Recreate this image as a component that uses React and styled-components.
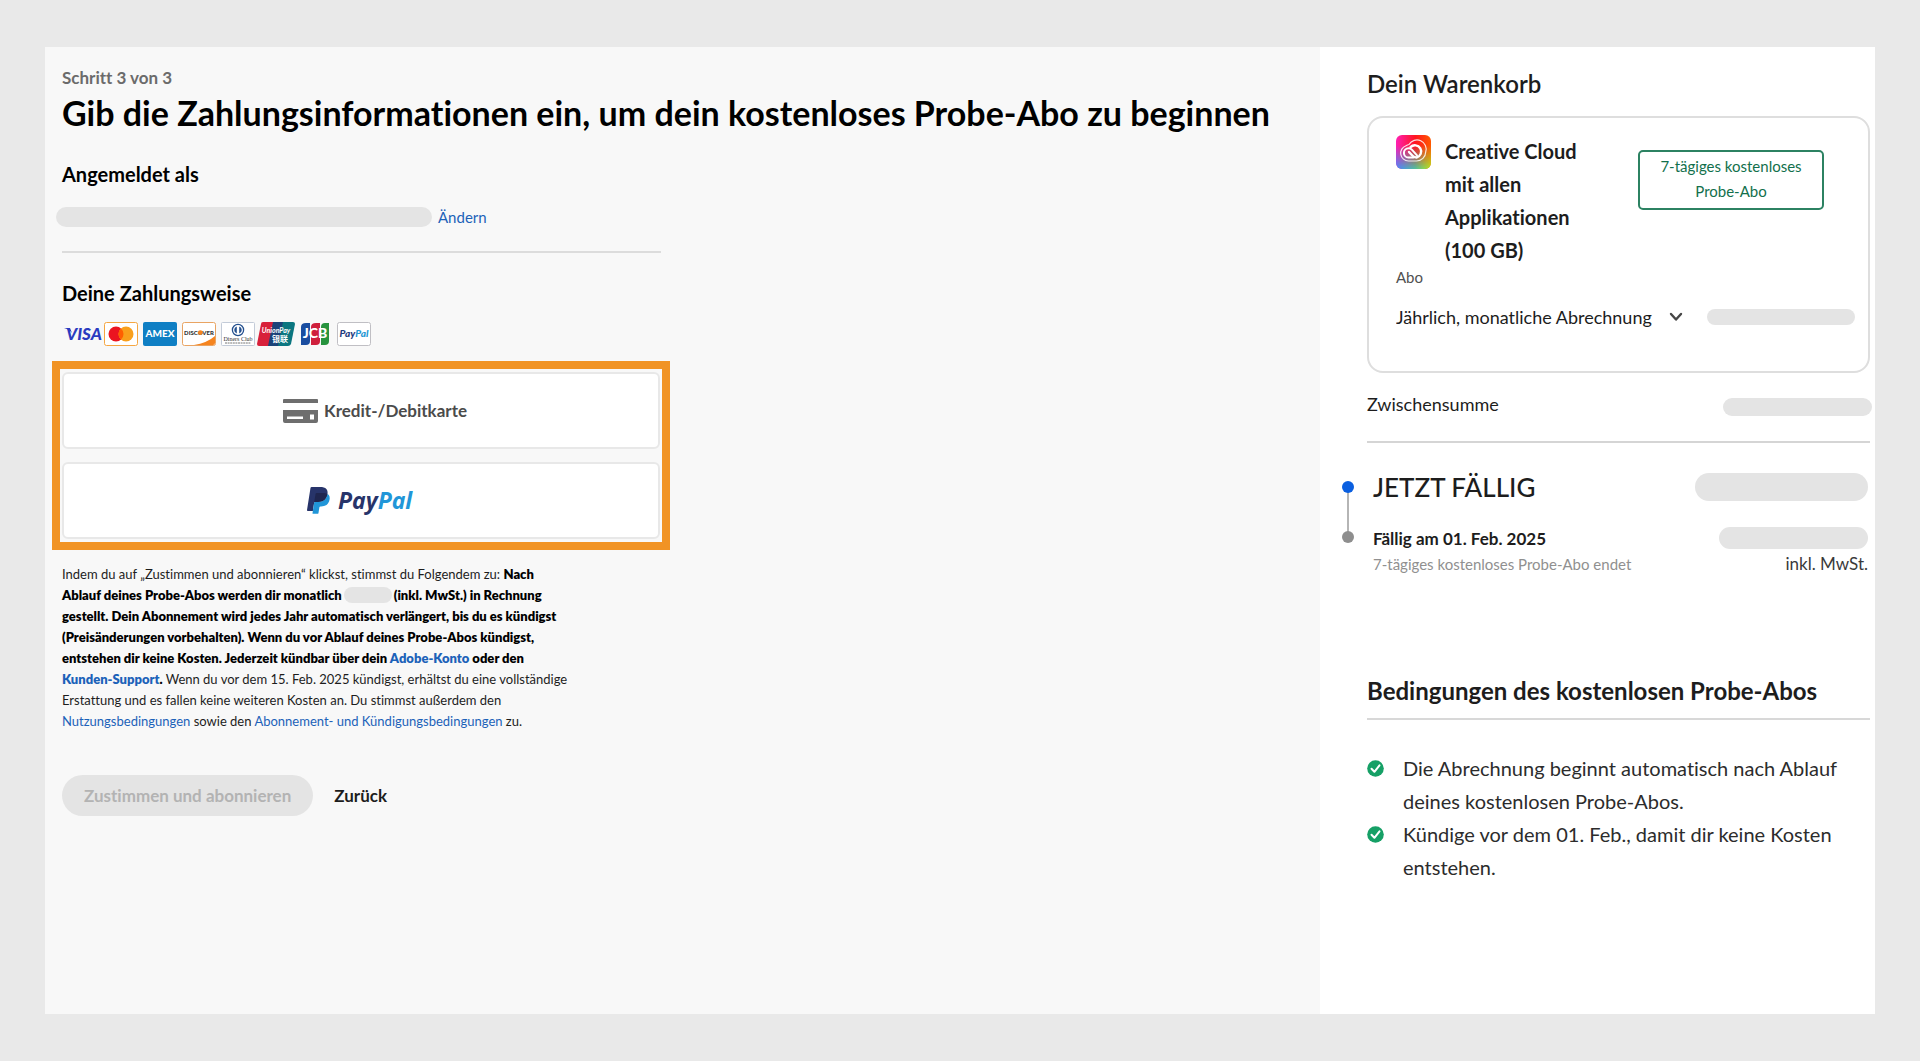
import React from "react";
import styled, { createGlobalStyle } from "styled-components";

const App = () => {
  return (
    <>
      <GlobalStyle />
      <Page>
        <Checkout>
          <Step>Schritt 3 von 3</Step>
          <Title>
            Gib die Zahlungsinformationen ein, um dein kostenloses Probe-Abo zu
            beginnen
          </Title>
          <Column>
            <Subtitle>Angemeldet als</Subtitle>
            <Account>
              <Pill $width="376px" $height="20px" />
              <a href="#account">Ändern</a>
            </Account>
            <Subtitle>Deine Zahlungsweise</Subtitle>
            <Brands />
            <Methods>
              <MethodButton type="button" $indent="28px">
                <CardIcon />
                Kredit-/Debitkarte
              </MethodButton>
              <MethodButton type="button" aria-label="PayPal">
                <PayPalLogo />
              </MethodButton>
            </Methods>
            <Legal>
              Indem du auf „Zustimmen und abonnieren“ klickst, stimmst du
              Folgendem zu:{" "}
              <b>
                Nach
                <br />
                Ablauf deines Probe-Abos werden dir monatlich
                <Pill $inline $width="48px" $height="16px" />
                (inkl. MwSt.) in Rechnung
                <br />
                gestellt. Dein Abonnement wird jedes Jahr automatisch
                verlängert, bis du es kündigst
                <br />
                (Preisänderungen vorbehalten). Wenn du vor Ablauf deines
                Probe-Abos kündigst,
                <br />
                entstehen dir keine Kosten. Jederzeit kündbar über dein{" "}
                <a href="#konto">Adobe-Konto</a> oder den
                <br />
                <a href="#support">Kunden-Support</a>.
              </b>{" "}
              Wenn du vor dem 15. Feb. 2025 kündigst, erhältst du eine
              vollständige
              <br />
              Erstattung und es fallen keine weiteren Kosten an. Du stimmst
              außerdem den
              <br />
              <a href="#nutzung">Nutzungsbedingungen</a> sowie den{" "}
              <a href="#abo">Abonnement- und Kündigungsbedingungen</a> zu.
            </Legal>
            <Actions>
              <SubmitButton type="submit" disabled>
                Zustimmen und abonnieren
              </SubmitButton>
              <BackButton type="button">Zurück</BackButton>
            </Actions>
          </Column>
        </Checkout>

        <Cart>
          <CartTitle>Dein Warenkorb</CartTitle>
          <Product>
            <ProductTop>
              <CreativeCloudIcon />
              <h3>Creative Cloud mit allen Applikationen (100 GB)</h3>
              <Badge>7-tägiges kostenloses Probe-Abo</Badge>
            </ProductTop>
            <label htmlFor="plan">Abo</label>
            <PlanRow>
              <PlanSelect id="plan" defaultValue="monthly">
                <option value="monthly">Jährlich, monatliche Abrechnung</option>
              </PlanSelect>
              <Chevron />
              <Pill $width="148px" $height="16px" />
            </PlanRow>
          </Product>
          <Subtotal>
            <span>Zwischensumme</span>
            <Pill $width="149px" $height="18px" />
          </Subtotal>
          <Due>
            <Timeline />
            <DueRow $height="44px">
              <h2>JETZT FÄLLIG</h2>
              <Pill $width="173px" $height="28px" />
            </DueRow>
            <DueRow $height="36px">
              <strong>Fällig am 01. Feb. 2025</strong>
              <Pill $width="149px" $height="22px" />
            </DueRow>
            <DueNote>
              <small>7-tägiges kostenloses Probe-Abo endet</small>
              <span>inkl. MwSt.</span>
            </DueNote>
          </Due>
          <TermsTitle>Bedingungen des kostenlosen Probe-Abos</TermsTitle>
          <Terms>
            <li>
              <CheckIcon />
              <span>
                Die Abrechnung beginnt automatisch nach Ablauf
                <br />
                deines kostenlosen Probe-Abos.
              </span>
            </li>
            <li>
              <CheckIcon />
              <span>
                Kündige vor dem 01. Feb., damit dir keine Kosten
                <br />
                entstehen.
              </span>
            </li>
          </Terms>
        </Cart>
      </Page>
    </>
  );
};

const Brands = () => (
  <BrandList>
    <svg viewBox="0 0 34 24" role="img" aria-label="Visa">
      <text x="1" y="18" fontSize="17" fontWeight="900" fontStyle="italic" fill="#2a3bc0">
        VISA
      </text>
      <path d="M-1 6h6l2 5q-3-4-8-5z" fill="#2a3bc0" />
    </svg>
    <svg viewBox="0 0 34 24" role="img" aria-label="Mastercard">
      <rect x="0.5" y="0.5" width="33" height="23" rx="2" fill="#fff" stroke="#f5a642" />
      <circle cx="12" cy="12" r="7.5" fill="#eb1420" />
      <circle cx="22" cy="12" r="7.5" fill="#f99f1b" />
      <path d="M17 6.4a7.5 7.5 0 0 1 0 11.2a7.5 7.5 0 0 1 0-11.2z" fill="#ff5f00" />
    </svg>
    <svg viewBox="0 0 34 24" role="img" aria-label="American Express">
      <rect width="34" height="24" rx="2" fill="#0f7fc4" />
      <text x="17" y="15" fontSize="10" fontWeight="900" textAnchor="middle" fill="#fff">
        AMEX
      </text>
    </svg>
    <svg viewBox="0 0 34 24" role="img" aria-label="Discover">
      <rect x="0.5" y="0.5" width="33" height="23" rx="2" fill="#fff" stroke="#e9a463" />
      <path d="M33 14v7a2 2 0 0 1-2 2H12Q25 21 33 14z" fill="#f5841f" />
      <text x="17" y="13" fontSize="6" fontWeight="900" textAnchor="middle" fill="#333">
        DISCOVER
      </text>
      <circle cx="18.4" cy="10.6" r="2.4" fill="#f5841f" />
    </svg>
    <svg viewBox="0 0 34 24" role="img" aria-label="Diners Club">
      <rect x="0.5" y="0.5" width="33" height="23" rx="1" fill="#fff" stroke="#c3cbd8" />
      <circle cx="17" cy="8" r="5.6" fill="#fff" stroke="#24508f" strokeWidth="1.3" />
      <path d="M15.8 4.4v7.2a3.8 3.8 0 0 1 0-7.2zM18.2 4.4a3.8 3.8 0 0 1 0 7.2z" fill="#24508f" />
      <text x="17" y="18.5" fontSize="6" textAnchor="middle" fill="#333" fontFamily="Liberation Serif, serif">
        Diners Club
      </text>
      <path d="M4 21h26" stroke="#777" strokeDasharray="2 0.6" />
    </svg>
    <svg viewBox="0 0 34 24" role="img" aria-label="UnionPay">
      <path d="M3 0h11L9 24H-1q-2 0-2-2L1 2q0-2 2-2z" fill="#d8203a" />
      <path d="M13 0h11l-5 24H8z" fill="#1c4379" />
      <path d="M23 0h10q2 0 2 2l-4 20q-1 2-3 2H18z" fill="#0b7680" />
      <text x="16" y="11" fontSize="7" fontWeight="700" fontStyle="italic" textAnchor="middle" fill="#fff">
        UnionPay
      </text>
      <text x="20" y="20" fontSize="8" fontWeight="700" textAnchor="middle" fill="#fff">
        银联
      </text>
    </svg>
    <svg viewBox="0 0 34 24" role="img" aria-label="JCB">
      <path d="M7 1h4v18q0 4-4 4H2V5q0-4 5-4z" fill="#1a4da0" />
      <path d="M17 1h4v18q0 4-4 4h-5V5q0-4 5-4z" fill="#cf1f3c" />
      <path d="M26 1h4v18q0 4-4 4h-4V5q0-4 4-4z" fill="#27933e" />
      <text x="16" y="16" fontSize="14" fontWeight="900" textAnchor="middle" fill="#fff">
        JCB
      </text>
    </svg>
    <svg viewBox="0 0 34 24" role="img" aria-label="PayPal">
      <rect x="-0.5" y="0.5" width="33" height="23" rx="2" fill="#fff" stroke="#c0bfc4" />
      <text x="16" y="15" fontSize="10" fontWeight="900" fontStyle="italic" textAnchor="middle" fill="#1f3a7d">
        Pay<tspan fill="#2496d3">Pal</tspan>
      </text>
    </svg>
  </BrandList>
);

const CardIcon = () => (
  <svg width="35" height="24" viewBox="0 0 35 24" fill="#6e6e6e" aria-hidden="true">
    <path d="M1 0h33a1 1 0 0 1 1 1v3H0V1a1 1 0 0 1 1-1z" />
    <path
      fillRule="evenodd"
      d="M0 11h35v11a2 2 0 0 1-2 2H2a2 2 0 0 1-2-2zM4 17.500v2.500h16v-2.500zM27 15.500v5h4v-5z"
    />
  </svg>
);

const PayPalLogo = () => (
  <PayPalSvg width="110" height="32" viewBox="0 0 110 32" aria-hidden="true">
    <g transform="translate(1 2) scale(0.089)">
      <path
        fill="#27346a"
        d="M217.168 23.507C203.234 7.625 178.046.816 145.823.816h-93.52A13.39 13.39 0 0 0 39.076 12.11L.136 259.077c-.774 4.87 2.997 9.28 7.933 9.28h57.736l14.5-91.971-.45 2.88c1.033-6.501 6.593-11.296 13.177-11.296h27.436c53.898 0 96.101-21.892 108.429-85.221.366-1.873.683-3.696.957-5.477 3.671-23.407-.025-39.34-12.686-53.765"
      />
      <path
        fill="#2196d8"
        d="M228.897 82.749c-12.328 63.32-54.53 85.221-108.429 85.221H93.024c-6.584 0-12.145 4.795-13.168 11.296L61.817 293.621c-.674 4.262 2.622 8.124 6.934 8.124h48.67a11.71 11.71 0 0 0 11.563-9.88l.474-2.48 9.173-58.136.591-3.213a11.71 11.71 0 0 1 11.562-9.88h7.284c47.147 0 84.064-19.154 94.852-74.55 4.503-23.15 2.173-42.478-9.739-56.054-3.613-4.112-8.1-7.508-13.327-10.28-.283 1.79-.59 3.604-.957 5.477z"
      />
      <path
        fill="#1f264f"
        d="M216.952 72.128a89.928 89.928 0 0 0-5.818-1.49 109.904 109.904 0 0 0-6.177-1.14c-7.408-1.199-15.5-1.765-24.19-1.765h-73.309a11.57 11.57 0 0 0-5.053 1.149 11.683 11.683 0 0 0-6.515 8.74l-15.582 98.798-.45 2.88c1.025-6.501 6.585-11.296 13.17-11.296h27.444c53.898 0 96.1-21.892 108.428-85.221.367-1.873.675-3.688.958-5.477-3.122-1.648-6.501-3.072-10.164-4.279a83.26 83.26 0 0 0-2.742-.899"
      />
    </g>
    <text
      x="32"
      y="24"
      fontSize="23"
      fontWeight="700"
      fontStyle="italic"
      fontFamily="Open Sans, sans-serif"
      fill="#27346a"
    >
      Pay<tspan fill="#2196d8">Pal</tspan>
    </text>
  </PayPalSvg>
);

const CreativeCloudIcon = () => (
  <svg width="35" height="34" viewBox="0 0 35 34" aria-hidden="true">
    <defs>
      <linearGradient id="ccTop" x1="0" x2="1" y1="0" y2="0">
        <stop offset="0" stopColor="#ff1fb4" />
        <stop offset="0.55" stopColor="#ff1520" />
        <stop offset="1" stopColor="#ff5a00" />
      </linearGradient>
      <linearGradient id="ccBottom" x1="0" x2="1" y1="0" y2="0">
        <stop offset="0" stopColor="#4a86ff" />
        <stop offset="0.55" stopColor="#4fc1a0" />
        <stop offset="1" stopColor="#b6e61c" />
      </linearGradient>
      <linearGradient id="ccFade" x1="0" x2="0" y1="0" y2="1">
        <stop offset="0.3" stopColor="#fff" stopOpacity="0" />
        <stop offset="1" stopColor="#fff" />
      </linearGradient>
      <mask id="ccMask">
        <rect width="35" height="34" fill="url(#ccFade)" />
      </mask>
    </defs>
    <rect width="35" height="34" rx="6" fill="url(#ccTop)" />
    <rect width="35" height="34" rx="6" fill="url(#ccBottom)" mask="url(#ccMask)" />
    <g fill="none" stroke="#fff" strokeLinecap="round">
      <path
        d="M20.500 26H12.500a7.800 7.800 0 0 1-2.500-15.200A8 8 0 0 1 13 9.500A9.200 9.200 0 0 1 29.700 17a9.200 9.200 0 0 1-9.200 9z"
        strokeWidth="1.2"
        opacity="0.85"
      />
      <path
        d="M17.500 22.500h-5a4.600 4.600 0 0 1 0-9.200c1.500 0 2.700.6 3.600 1.600l4.900 5.400"
        strokeWidth="2"
      />
      <path
        d="M14.500 12.200a6.200 6.200 0 1 1 6 10.300c-1.700 0-3-.6-4-1.700l-3.500-3.800"
        strokeWidth="2.4"
      />
    </g>
  </svg>
);

const Chevron = () => (
  <svg width="14" height="10" viewBox="0 0 14 10" aria-hidden="true">
    <path
      d="M2 2l5 5.500L12 2"
      fill="none"
      stroke="#464646"
      strokeWidth="2.4"
      strokeLinecap="round"
      strokeLinejoin="round"
    />
  </svg>
);

const CheckIcon = () => (
  <svg width="17" height="17" viewBox="0 0 17 17" aria-hidden="true">
    <circle cx="8.500" cy="8.500" r="8.300" fill="#16a066" />
    <path
      d="M4.500 8.800l2.900 3L12.500 5.300"
      fill="none"
      stroke="#fff"
      strokeWidth="2"
      strokeLinecap="round"
      strokeLinejoin="round"
    />
  </svg>
);

const Timeline = () => (
  <TimelineSvg width="12" height="64" viewBox="0 0 12 64" aria-hidden="true">
    <path d="M6 7v50" stroke="#b5b5b5" strokeWidth="2" />
    <circle cx="6" cy="7" r="6" fill="#0a5fe0" />
    <circle cx="6" cy="57" r="6" fill="#8e8e8e" />
  </TimelineSvg>
);

const GlobalStyle = createGlobalStyle`
  * {
    box-sizing: border-box;
  }
  body {
    margin: 0;
    background: #e9e9e9;
    color: #1d1d1d;
    font-family: Lato, "Noto Sans CJK SC", sans-serif;
    font-variant-ligatures: none;
  }
  h1, h2, h3, p, ul {
    margin: 0;
    padding: 0;
  }
  a {
    color: #1c62b9;
    text-decoration: none;
  }
  button, select {
    font-family: inherit;
    font-variant-ligatures: inherit;
    cursor: pointer;
  }
`;

const Page = styled.main`
  display: grid;
  grid-template-columns: minmax(0, 1fr) 555px;
  min-height: calc(100vh - 94px);
  margin: 47px 45px;
`;

const Pill = styled.span`
  display: ${({ $inline }) => ($inline ? "inline-block" : "block")};
  flex: none;
  width: ${({ $width }) => $width};
  height: ${({ $height }) => $height};
  margin: ${({ $inline }) => ($inline ? "0 2px" : "0")};
  vertical-align: ${({ $inline }) => ($inline ? "text-bottom" : "middle")};
  border-radius: 14px;
  background: #e4e4e4;
`;

const Checkout = styled.section`
  padding: 19px 17px;
  background: #f8f8f8;
`;

const Step = styled.p`
  font-size: 17px;
  line-height: 24px;
  font-weight: 700;
  color: #6b6b6b;
`;

const Title = styled.h1`
  font-size: 34px;
  line-height: 46px;
  font-weight: 700;
  color: #000;
  white-space: nowrap;
`;

const Column = styled.div`
  width: 599px;
  padding-top: 25px;
`;

const Subtitle = styled.h2`
  font-size: 20px;
  line-height: 26px;
  font-weight: 700;
  color: #000;
`;

const Account = styled.div`
  display: flex;
  align-items: center;
  gap: 6px;
  height: 66px;
  margin: 0 0 27px -6px;
  padding-bottom: 6px;
  font-size: 15px;
  position: relative;

  &::after {
    content: "";
    position: absolute;
    left: 6px;
    right: 0;
    bottom: 0;
    border-bottom: 2px solid #dcdcdc;
  }
`;

const BrandList = styled.div`
  display: flex;
  gap: 5px;
  padding: 16px 3px 15px;

  svg {
    width: 34px;
    height: 24px;
    overflow: visible;
  }
`;

const Methods = styled.div`
  display: grid;
  gap: 13px;
  margin: 0 -9px 0 -10px;
  padding: 3px 2px;
  border: 8px solid #f19324;
`;

const MethodButton = styled.button`
  display: flex;
  align-items: center;
  justify-content: center;
  gap: 6px;
  height: 77px;
  padding: 0 0 0 ${({ $indent }) => $indent || "0"};
  border: 2px solid #e8e8e8;
  border-radius: 6px;
  background: #fff;
  color: #4b4b4b;
  font-size: 17px;
  font-weight: 700;
`;

const PayPalSvg = styled.svg`
  overflow: visible;
`;

const Legal = styled.p`
  margin-top: 14px;
  font-size: 13px;
  line-height: 21px;
  white-space: nowrap;

  b {
    font-weight: 800;
    color: #000;
  }
`;

const Actions = styled.div`
  display: flex;
  align-items: center;
  gap: 21px;
  margin-top: 43px;
`;

const SubmitButton = styled.button`
  height: 41px;
  padding: 0 22px;
  border: none;
  border-radius: 21px;
  background: #e4e4e4;
  color: #b3b3b3;
  font-size: 17px;
  font-weight: 700;
`;

const BackButton = styled.button`
  padding: 0;
  border: none;
  background: none;
  color: #1d1d1d;
  font-size: 17px;
  font-weight: 700;
`;

const Cart = styled.aside`
  padding: 20px 5px 20px 47px;
  background: #fff;
`;

const CartTitle = styled.h2`
  font-size: 24px;
  line-height: 34px;
  font-weight: 600;
`;

const Product = styled.div`
  height: 257px;
  margin-top: 15px;
  padding: 17px 13px 0 27px;
  border: 2px solid #dedede;
  border-radius: 16px;

  label {
    display: block;
    font-size: 15px;
    line-height: 20px;
    color: #505050;
  }
`;

const ProductTop = styled.div`
  display: flex;
  align-items: flex-start;

  h3 {
    width: 150px;
    margin-left: 14px;
    font-size: 20px;
    line-height: 33px;
    font-weight: 700;
  }
`;

const Badge = styled.span`
  width: 186px;
  margin: 15px 31px 0 auto;
  padding: 2px 16px 4px;
  border: 2px solid #2c8262;
  border-radius: 5px;
  color: #12704c;
  font-size: 15px;
  line-height: 25px;
  text-align: center;
`;

const PlanRow = styled.div`
  display: flex;
  align-items: center;
  height: 60px;

  svg {
    margin: 0 auto 0 16px;
  }
`;

const PlanSelect = styled.select`
  appearance: none;
  padding: 0;
  border: none;
  background: none;
  color: #1d1d1d;
  font-size: 18px;
`;

const Subtotal = styled.div`
  display: flex;
  align-items: center;
  justify-content: space-between;
  height: 68px;
  margin-right: -2px;
  font-size: 18px;

  span:first-child {
    padding-bottom: 6px;
  }
`;

const Due = styled.div`
  position: relative;
  padding: 22px 2px 0 6px;
  border-top: 2px solid #d5d5d5;
`;

const TimelineSvg = styled.svg`
  position: absolute;
  left: -25px;
  top: 37px;
`;

const DueRow = styled.div`
  display: flex;
  align-items: center;
  justify-content: space-between;
  height: ${({ $height }) => $height};

  & + & {
    margin-top: 11px;
  }
  h2 {
    font-size: 26px;
    font-weight: 500;
  }
  strong {
    font-size: 17px;
  }
`;

const DueNote = styled.div`
  display: flex;
  align-items: center;
  justify-content: space-between;
  line-height: 16px;
  font-size: 17px;
  color: #3a3a3a;

  small {
    font-size: 15px;
    color: #909090;
  }
`;

const TermsTitle = styled.h2`
  margin-top: 102px;
  padding-bottom: 10px;
  border-bottom: 2px solid #d8d8d8;
  font-size: 24px;
  line-height: 34px;
  font-weight: 700;
`;

const Terms = styled.ul`
  padding-top: 32px;
  list-style: none;

  li {
    display: flex;
    gap: 19px;
    font-size: 20px;
    line-height: 33px;
    color: #2c2c2c;
    white-space: nowrap;
  }
  svg {
    flex: none;
    margin-top: 8px;
  }
`;

export default App;
